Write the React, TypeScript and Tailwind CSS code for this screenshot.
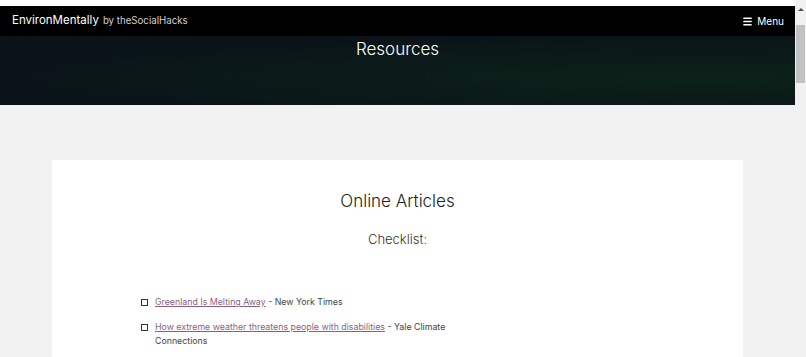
import { Menu } from 'lucide-react';

const font = { fontFamily: 'Inter, "Noto Sans", sans-serif' };

function Item({ title, source, wrap }: { title: string; source: string; wrap?: boolean }) {
  return (
    <li className="flex items-start gap-[7px]">
      <span className="mt-[4px] h-[7px] w-[7px] shrink-0 border-[1.5px] border-[#333]" />
      <span className={`text-[8.8px] leading-[14px] text-[#444] ${wrap ? 'w-[300px]' : ''}`}>
        <a href="#" className="text-[#8a5f85] underline decoration-[#8a5f85]">
          {title}
        </a>{' '}
        - {source}
      </span>
    </li>
  );
}

export default function App() {
  return (
    <div className="flex h-[357px] w-[806px] overflow-hidden bg-[#f2f2f2]" style={font}>
      <div className="flex min-w-0 flex-1 flex-col">
        <div className="h-[6px] bg-white" />
        <header className="flex h-[30px] items-center justify-between bg-black pl-[12px] pr-[11px]">
          <div className="flex items-baseline gap-[4px]">
            <span className="text-[11.5px] font-normal text-white">EnvironMentally</span>
            <span className="text-[9.7px] text-[#d0d0d0]">by theSocialHacks</span>
          </div>
          <div className="flex items-center gap-[4px] text-[10px] text-white">
            <Menu size={11} strokeWidth={3} />
            <span>Menu</span>
          </div>
        </header>
        <section className="flex h-[69px] justify-center bg-[radial-gradient(ellipse_at_88%_60%,#0b2219_0%,#0b1a18_40%,#0a1318_75%)] pt-[1px]">
          <h1 className="text-[17px] font-light text-white">Resources</h1>
        </section>
        <main className="flex-1 px-[52px] pt-[55px]">
          <div className="h-full bg-white pt-[29px]">
            <h2 className="text-center text-[17px] font-light text-[#222]">Online Articles</h2>
            <h3 className="mt-[15px] text-center text-[13px] font-light text-[#333]">Checklist:</h3>
            <ul className="ml-[89px] mt-[46px] flex flex-col gap-[11px]">
              <Item title="Greenland Is Melting Away" source="New York Times" />
              <Item
                title="How extreme weather threatens people with disabilities"
                source="Yale Climate Connections"
                wrap
              />
            </ul>
          </div>
        </main>
      </div>
      <div className="flex w-[11px] flex-col items-center bg-[#f1f1f1]">
        <div className="mt-[8px] h-0 w-0 border-x-[3px] border-b-[3px] border-x-transparent border-b-[#505050]" />
        <div className="mt-[14px] h-[58px] w-[9px] bg-[#c1c1c1]" />
      </div>
    </div>
  );
}
